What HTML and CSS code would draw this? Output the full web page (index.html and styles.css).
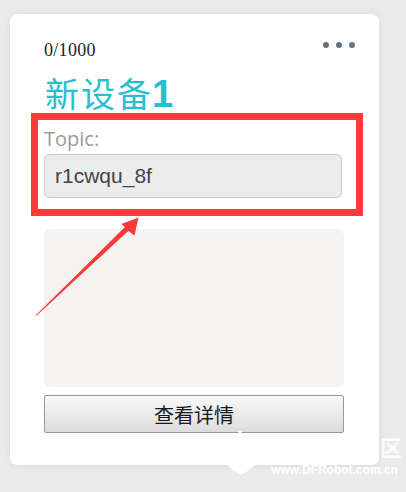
FILE: index.html
```html
<!DOCTYPE html>
<html lang="zh">
<head>
<meta charset="utf-8">
<link rel="stylesheet" href="styles.css">
</head>
<body>
<div class="card">
  <div class="card-head">
    <span class="count">0/1000</span>
    <span class="more"><i></i><i></i><i></i></span>
  </div>
  <h1 class="title"><span class="title-cjk">新设备</span><span class="title-num">1</span></h1>
  <div class="field">
    <label class="field-label">Topic:</label>
    <div class="field-input">r1cwqu_8f</div>
  </div>
  <div class="panel"></div>
  <button class="btn">查看详情</button>
</div>

<div class="annot-box"></div>
<svg class="annot-arrow" width="406" height="492" viewBox="0 0 406 492">
  <polygon points="35.5,315.5 124.7,227.2 121.5,224 138.5,217.5 134.5,235.5 128.3,230.9 36.5,315.8" fill="#fd3a3a"/>
</svg>

<svg class="wm-shape" width="406" height="492" viewBox="0 0 406 492">
  <polygon points="224,462 258,462 248,471 241,475 234,471" fill="#ffffff"/>
  <rect x="238.5" y="431" width="3" height="3" fill="#ffffff"/>
</svg>
<div class="wm-cn">区</div>
<div class="wm-url">www.DFRobot.com.cn</div>
</body>
</html>
```
FILE: styles.css
```css
html, body {
  margin: 0;
  padding: 0;
}
body {
  background: #ebebeb;
  width: 406px;
  height: 492px;
  overflow: hidden;
  position: relative;
  font-family: "Liberation Sans", Arial, sans-serif;
}
.card {
  margin: 14px 0 0 10px;
  width: 369px;
  height: 451px;
  box-sizing: border-box;
  padding: 26px 35px 0 34px;
  background: #fff;
  border-radius: 7px;
  box-shadow: 0 0 8px rgba(0, 0, 0, 0.08);
  display: flex;
  flex-direction: column;
}
.card-head {
  display: flex;
  justify-content: space-between;
  align-items: center;
  height: 20px;
}
.count {
  font-family: "Liberation Serif", "Times New Roman", serif;
  font-size: 18px;
  line-height: 20px;
  color: #1e1e2e;
  letter-spacing: 0.3px;
}
.more {
  display: flex;
  gap: 7px;
  margin-right: -11px;
  margin-top: -10px;
}
.more i {
  display: block;
  width: 6px;
  height: 6px;
  border-radius: 50%;
  background: #5f7388;
}
.title {
  margin: 13px 0 0 0;
  font-size: 34px;
  line-height: 40px;
  height: 40px;
  color: #27c0ce;
  font-family: "Liberation Sans", Arial, sans-serif;
  font-weight: bold;
  white-space: nowrap;
}
.title-cjk {
  font-family: "Noto Sans CJK SC", sans-serif;
  font-weight: 400;
  letter-spacing: 2px;
  margin-left: 1px;
}
.title-num {
  font-size: 38px;
  margin-left: -1px;
}
.field {
  margin-top: 14px;
  display: flex;
  flex-direction: column;
}
.field-label {
  font-family: "Open Sans", sans-serif;
  font-size: 20px;
  line-height: 24px;
  color: #9a9a9a;
}
.field-input {
  margin-top: 3px;
  width: 298px;
  height: 44px;
  box-sizing: border-box;
  border: 1px solid #cbcbcb;
  border-radius: 5px;
  background: #ececec;
  font-family: "Liberation Sans", Arial, sans-serif;
  font-size: 21px;
  line-height: 42px;
  color: #444;
  padding-left: 10px;
}
.panel {
  margin-top: 31px;
  height: 158px;
  background: #f5f2ef;
  border-radius: 7px;
}
.btn {
  margin-top: 8px;
  height: 38px;
  width: 300px;
  border: 1px solid #999;
  border-radius: 2px;
  background: linear-gradient(#f8f8f8, #dcdcdc);
  font-family: "Noto Sans CJK SC", sans-serif;
  font-size: 20px;
  color: #1a1a1a;
  padding: 0;
}
.annot-box {
  position: absolute;
  left: 31px;
  top: 113px;
  width: 318px;
  height: 89px;
  border: 7px solid #fd3a3a;
}
.annot-arrow, .wm-shape {
  position: absolute;
  left: 0;
  top: 0;
}
.wm-cn {
  position: absolute;
  left: 380px;
  top: 433px;
  font-family: "Noto Sans CJK SC", sans-serif;
  font-weight: bold;
  font-size: 22px;
  line-height: 26px;
  color: rgba(255, 255, 255, 0.9);
}
.wm-url {
  position: absolute;
  left: 271px;
  top: 463px;
  font-family: "Liberation Sans", Arial, sans-serif;
  font-weight: bold;
  font-size: 12px;
  line-height: 14px;
  color: #fff;
}
```
